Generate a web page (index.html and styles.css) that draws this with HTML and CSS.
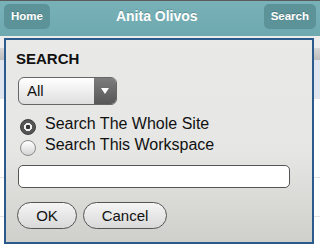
FILE: index.html
```html
<!DOCTYPE html>
<html lang="en">
<head>
  <meta charset="UTF-8">
  <title>Anita Olivos - Search</title>
  <link rel="stylesheet" href="styles.css">
</head>
<body>

  <div class="header">
    <a class="hbtn" href="#">Home</a>
    <h1 class="title">Anita Olivos</h1>
    <a class="hbtn" href="#">Search</a>
  </div>

  <div class="page">
    <div class="bar"></div>
    <div class="row row-blue"></div>
    <div class="row row-a"></div>
    <div class="row row-b"></div>
    <div class="row"></div>
  </div>

  <form class="dialog" id="searchForm">
    <h2 class="dialog-title">SEARCH</h2>

    <div class="select">
      <span class="select-value">All</span>
      <span class="select-arrow"><span class="tri"></span></span>
    </div>

    <div class="radios">
      <label class="radio-row"><span class="radio checked"></span>Search The Whole Site</label>
      <label class="radio-row"><span class="radio"></span>Search This Workspace</label>
    </div>

    <input type="text" class="field">

    <div class="actions">
      <button type="button" class="pill ok">OK</button>
      <button type="button" class="pill cancel">Cancel</button>
    </div>
  </form>

</body>
</html>
```

FILE: styles.css
```css
body {
  margin: 0;
  width: 320px;
  height: 245px;
  overflow: hidden;
  position: relative;
  font-family: "Liberation Sans", Arial, sans-serif;
  background-color: #ececec;
}
.header {
  height: 36px;
  box-sizing: border-box;
  border-top: 1px solid #5c5c5c;
  background: linear-gradient(#78b2b8, #6ea9af);
  display: flex;
  align-items: flex-start;
  padding: 3px 4px 0 4px;
}
.hbtn {
  height: 25px;
  line-height: 25px;
  padding: 0 7px;
  border-radius: 5px;
  background-color: #5c9399;
  color: white;
  font-size: 11.5px;
  font-weight: bold;
  text-decoration: none;
  text-shadow: 0 -1px 0 rgba(0,0,0,0.2);
}
.title {
  flex: 1;
  margin: 0;
  text-align: center;
  color: white;
  font-size: 14px;
  line-height: 24px;
  font-weight: bold;
  text-shadow: 0 -1px 0 rgba(0,0,0,0.2);
}
.page {
  padding-top: 12px;
}
.bar {
  height: 12px;
  background: linear-gradient(#d6d6d6, #bdbdbd);
}
.row {
  height: 38px;
  background-color: white;
  border-bottom: 1px solid #e4e4e4;
}
.row-blue {
  background-color: #dfe6ef;
}
.row-a {
  height: 78px;
}
.dialog {
  position: absolute;
  left: 4px;
  top: 38px;
  width: 310px;
  height: 206px;
  box-sizing: border-box;
  margin: 0;
  padding: 10px 12px 0 12px;
  border: 2px solid #2b5b8c;
  background: linear-gradient(#e9e9e7, #e6e6e4 55%, #cfcfcb);
}
.dialog-title {
  margin: 0 0 9px -2px;
  font-size: 15px;
  line-height: 18px;
  color: #111;
}
.select {
  display: flex;
  width: 99px;
  height: 28px;
  box-sizing: border-box;
  border: 1px solid #666;
  border-radius: 6px;
  overflow: hidden;
  background: linear-gradient(#ffffff, #dedede);
}
.select-value {
  flex: 1;
  padding-left: 8px;
  font-size: 15px;
  line-height: 26px;
  color: #111;
}
.select-arrow {
  width: 22px;
  display: flex;
  align-items: center;
  justify-content: center;
  background: linear-gradient(#7c7c7c, #575757);
}
.tri {
  width: 0;
  height: 0;
  border-left: 4px solid transparent;
  border-right: 4px solid transparent;
  border-top: 6px solid white;
}
.radios {
  margin-top: 10px;
}
.radio-row {
  display: flex;
  align-items: flex-start;
  height: 21px;
  font-size: 16px;
  line-height: 18px;
  color: #111;
}
.radio {
  width: 16px;
  height: 16px;
  box-sizing: border-box;
  margin: 4px 9px 0 2px;
  border-radius: 50%;
  border: 1px solid #8a8a8a;
  background: linear-gradient(#ffffff, #d4d4d4);
}
.radio.checked {
  border-color: #3a3a3a;
  background: radial-gradient(circle, #333 0 2px, #f0f0f0 2.5px 3.8px, #555 4.3px);
}
.field {
  display: block;
  margin-top: 8px;
  width: 272px;
  height: 23px;
  box-sizing: border-box;
  border: 1px solid #555;
  border-radius: 5px;
  background-color: white;
}
.actions {
  display: flex;
  gap: 6px;
  margin-top: 14px;
  margin-left: -1px;
}
.pill {
  height: 27px;
  border: 1px solid #555;
  border-radius: 14px;
  background: linear-gradient(#f5f5f5, #d9d9d9);
  font-family: "Liberation Sans", Arial, sans-serif;
  font-size: 15px;
  color: #111;
  padding: 0;
}
.ok {
  width: 60px;
}
.cancel {
  width: 84px;
}
```
